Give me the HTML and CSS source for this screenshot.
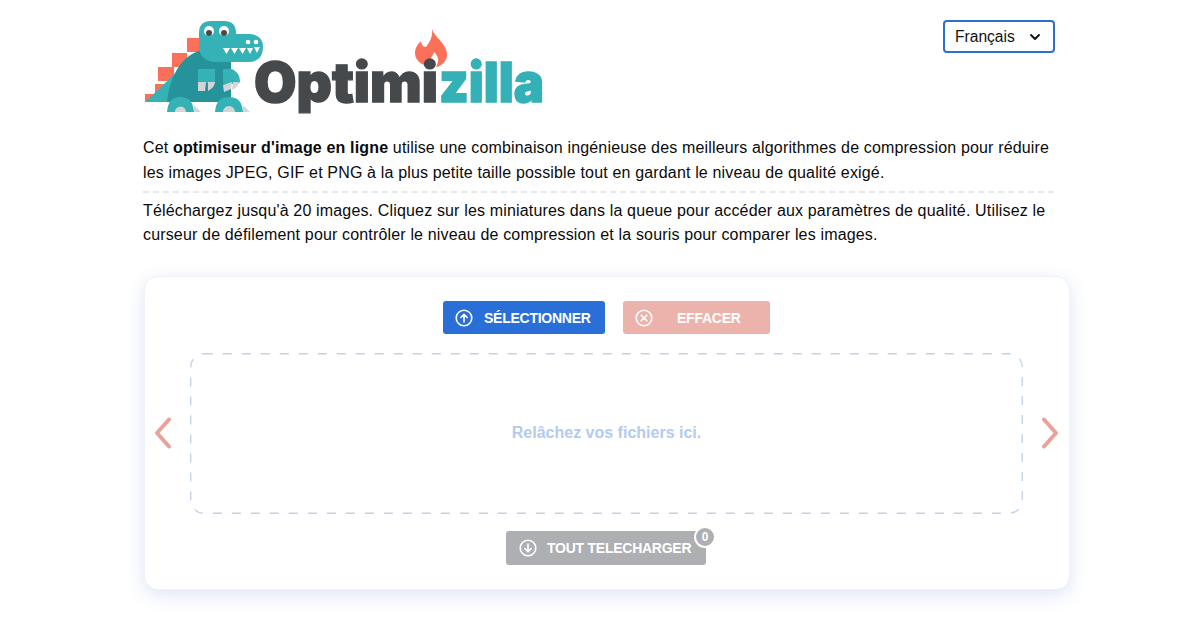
FILE: index.html
```html
<!DOCTYPE html>
<html lang="fr">
<head>
<meta charset="utf-8">
<title>Optimizilla</title>
<link rel="stylesheet" href="styles.css">
</head>
<body>
<div class="page">
  <header class="header">
    <svg class="logo" width="420" height="100" viewBox="143 15 420 100" role="img" aria-label="Optimizilla">
      <rect x="187" y="38" width="14" height="14" fill="#fb7059"/>
      <rect x="172" y="53" width="15" height="14" fill="#fb7059"/>
      <rect x="158" y="67" width="16" height="14" fill="#fb7059"/>
      <rect x="155" y="84" width="9" height="9" fill="#fb7059"/>
      <rect x="145" y="94" width="8" height="8" fill="#fb7059"/>
      <path d="M145 102 L181 68 L190 102 Z" fill="#35b2b6"/>
      <path d="M167 102 C169 80 180 54 203 50 L231 50 L231 102 Z" fill="#26929a"/>
      <path d="M199 33 Q199 21 211 21 L224 21 Q236 21 236 33 L236 34 L250 34 Q263 35 263 47 Q263 62 248 62 L214 62 Q199 60 199 46 Z" fill="#35b2b6"/>
      <circle cx="209" cy="31" r="5" fill="#fff"/>
      <circle cx="224" cy="31" r="5" fill="#fff"/>
      <circle cx="209" cy="33" r="3" fill="#45494b"/>
      <circle cx="224" cy="33" r="3" fill="#45494b"/>
      <rect x="204" y="36" width="25" height="3" fill="#35b2b6"/>
      <circle cx="248" cy="42" r="2.300" fill="#fff"/>
      <circle cx="256" cy="42" r="2.300" fill="#fff"/>
      <path d="M223 48h7l-3.500 6Z M231 48h7l-3.500 6Z M239 48h7l-3.500 6Z M247 48h6l-3 6Z M254 47h6l-3 6Z" fill="#fff"/>
      <path d="M198 69 H215 V83 H198 Z" fill="#35b2b6"/>
      <path d="M223 69 H232 Q240 73 240 81 Q240 84 236 84 H223 Z" fill="#35b2b6"/>
      <path d="M198 82 H206 L205 91 H198 Z M208 82 H215 Q215 87 208 91 Z" fill="#d1d5d6"/>
      <path d="M223 85 L232 82 L231 89 L224 92 Z M233 82 H239 Q238 87 232 90 Z" fill="#d1d5d6"/>
      <path d="M167 112 Q168 97 180 97 Q193 97 194 112 Z" fill="#35b2b6"/>
      <path d="M215 112 Q216 97 229 97 Q242 97 243 112 Z" fill="#35b2b6"/>
      <path d="M175 112 a5.500 5.500 0 0 1 11 0 Z M194 105 l7 7 h-7 Z M223 112 a6 6 0 0 1 12 0 Z M243 105 l7 7 h-7 Z" fill="#d1d5d6"/>
      <path d="M432 29 C435 38 445 42 447 53 C448 60 442 66 436 67 C440 60 438 56 434 52 C433 56 430 58 430 62 C430 64 431 66 432 67 C424 66 415 62 415 53 C415 48 418 44 421 41 C421 44 423 47 426 47 C430 42 433 36 432 29 Z" fill="#fb7059"/>
      <text class="mark mark-dark" x="254" y="102" textLength="184" lengthAdjust="spacingAndGlyphs">Optimi</text>
      <text class="mark mark-teal" x="439" y="102" textLength="105" lengthAdjust="spacingAndGlyphs">zilla</text>
    </svg>
    <button class="lang" type="button">
      <span>Français</span>
      <svg width="12" height="8" viewBox="0 0 12 8"><path d="M2 2 6 6l4-4" fill="none" stroke="#111" stroke-width="1.900" stroke-linecap="round" stroke-linejoin="round"/></svg>
    </button>
  </header>

  <section class="intro">
    <p>Cet <b>optimiseur d'image en ligne</b> utilise une combinaison ingénieuse des meilleurs algorithmes de compression pour réduire les images JPEG, GIF et PNG à la plus petite taille possible tout en gardant le niveau de qualité exigé.</p>
    <p class="second">Téléchargez jusqu'à 20 images. Cliquez sur les miniatures dans la queue pour accéder aux paramètres de qualité. Utilisez le curseur de défilement pour contrôler le niveau de compression et la souris pour comparer les images.</p>
  </section>

  <main class="card">
    <div class="actions">
      <button class="btn btn-select" type="button">
        <svg width="18" height="18" viewBox="0 0 18 18" fill="none" stroke="#fff" stroke-width="1.600" stroke-linecap="round" stroke-linejoin="round"><circle cx="9" cy="9" r="7.800"/><path d="M9 13V5.500M5.800 8.500 9 5.300l3.200 3.200"/></svg>
        <span>SÉLECTIONNER</span>
      </button>
      <button class="btn btn-clear" type="button">
        <svg width="18" height="18" viewBox="0 0 18 18" fill="none" stroke="#fff" stroke-width="1.600" stroke-linecap="round"><circle cx="9" cy="9" r="7.800"/><path d="M6.200 6.200l5.600 5.600M11.800 6.200l-5.600 5.600"/></svg>
        <span>EFFACER</span>
      </button>
    </div>
    <div class="stage">
      <svg class="arrow" width="18" height="32" viewBox="0 0 18 32"><path d="M15 2.500 3 16l12 13.500" fill="none" stroke="#e9a299" stroke-width="4" stroke-linecap="round" stroke-linejoin="round"/></svg>
      <div class="drop">
        <svg class="drop-line" width="833" height="161" viewBox="0 0 833 161"><rect x=".75" y=".75" width="831.500" height="159.500" rx="13" fill="none" stroke="#bfd2e8" stroke-width="1.300" stroke-dasharray="9 10"/></svg>
        <span>Relâchez vos fichiers ici.</span>
      </div>
      <svg class="arrow" width="18" height="32" viewBox="0 0 18 32"><path d="M3 2.500 15 16 3 29.500" fill="none" stroke="#e9a299" stroke-width="4" stroke-linecap="round" stroke-linejoin="round"/></svg>
    </div>
    <div class="download">
      <button class="btn btn-all" type="button">
        <svg width="18" height="18" viewBox="0 0 18 18" fill="none" stroke="#fff" stroke-width="1.600" stroke-linecap="round" stroke-linejoin="round"><circle cx="9" cy="9" r="7.800"/><path d="M9 5v7.500M5.800 9.500 9 12.700l3.200-3.200"/></svg>
        <span>TOUT TELECHARGER</span>
        <span class="count">0</span>
      </button>
    </div>
  </main>
</div>
</body>
</html>
```

FILE: styles.css
```css
* { box-sizing: border-box; }

html, body {
  margin: 0;
  background: #fff;
}

body {
  min-height: 624px;
  font-family: "Liberation Sans", Arial, sans-serif;
  color: #0b0b0b;
}

.page {
  width: 927px;
  margin-left: 143px;
}

.header {
  display: flex;
  justify-content: space-between;
  align-items: flex-start;
  height: 136px;
  padding-top: 15px;
  padding-right: 15px;
}

.logo { display: block; }

.mark {
  font-family: Inter, "Liberation Sans", sans-serif;
  font-weight: 900;
  font-size: 55px;
  stroke-width: 1.400px;
}
.mark-dark { fill: #46494b; stroke: #46494b; }
.mark-teal { fill: #33b1b6; stroke: #33b1b6; }

.lang {
  display: flex;
  align-items: center;
  justify-content: space-between;
  width: 112px;
  height: 33px;
  margin-top: 5px;
  padding: 0 12px 0 10px;
  background: #fff;
  border: 2px solid #2d6fce;
  border-radius: 4px;
  font: 16px "Liberation Sans", Arial, sans-serif;
  color: #111;
}

.lang span { font-size: 15.600px; }

.intro {
  width: 911px;
  font-size: 16px;
  line-height: 24.500px;
  letter-spacing: .16px;
}

.intro p { margin: 0; }

.intro .second {
  margin-top: 6px;
  padding-top: 6px;
  border-top: 2px dashed #e4e8ef;
  line-height: 23.500px;
}

.card {
  margin-top: 30px;
  margin-left: 1px;
  width: 926px;
  height: 314px;
  padding-top: 24px;
  background: #fff;
  border: 1px solid #f0f2f9;
  border-radius: 14px;
  box-shadow: 0 5px 18px rgba(60, 100, 200, .17);
}

.actions {
  display: flex;
  justify-content: center;
  gap: 18px;
  margin-left: -1px;
}

.btn {
  position: relative;
  display: flex;
  align-items: center;
  height: 33px;
  padding: 0;
  border: 0;
  border-radius: 3px;
  color: #fff;
  font: bold 14px "Liberation Sans", Arial, sans-serif;
  letter-spacing: -.25px;
}

.btn-select {
  width: 162px;
  padding-left: 12px;
  gap: 11px;
  background: #2a6fd8;
}

.btn-clear {
  width: 147px;
  padding-left: 12px;
  gap: 24px;
  background: #ecb3ad;
}

.stage {
  display: flex;
  align-items: center;
  justify-content: space-between;
  margin-top: 19px;
  padding: 0 10px 0 9px;
}

.arrow { margin-top: -2px; }

.drop {
  position: relative;
  display: flex;
  align-items: center;
  justify-content: center;
  width: 833px;
  height: 161px;
  padding-bottom: 2px;
  background: #fff;
  color: #b2cbef;
  font-size: 16px;
  font-weight: bold;
}

.drop-line {
  position: absolute;
  inset: 0;
}

.download {
  display: flex;
  justify-content: center;
  margin-top: 17px;
  margin-left: -2px;
}

.btn-all {
  width: 200px;
  height: 34px;
  padding-left: 13px;
  gap: 10px;
  background: #adafb3;
}

.count {
  position: absolute;
  top: -5px;
  right: -10px;
  width: 22px;
  height: 22px;
  display: flex;
  align-items: center;
  justify-content: center;
  border: 2px solid #fff;
  border-radius: 50%;
  background: #adafb3;
  font-size: 12px;
  letter-spacing: 0;
}
```
